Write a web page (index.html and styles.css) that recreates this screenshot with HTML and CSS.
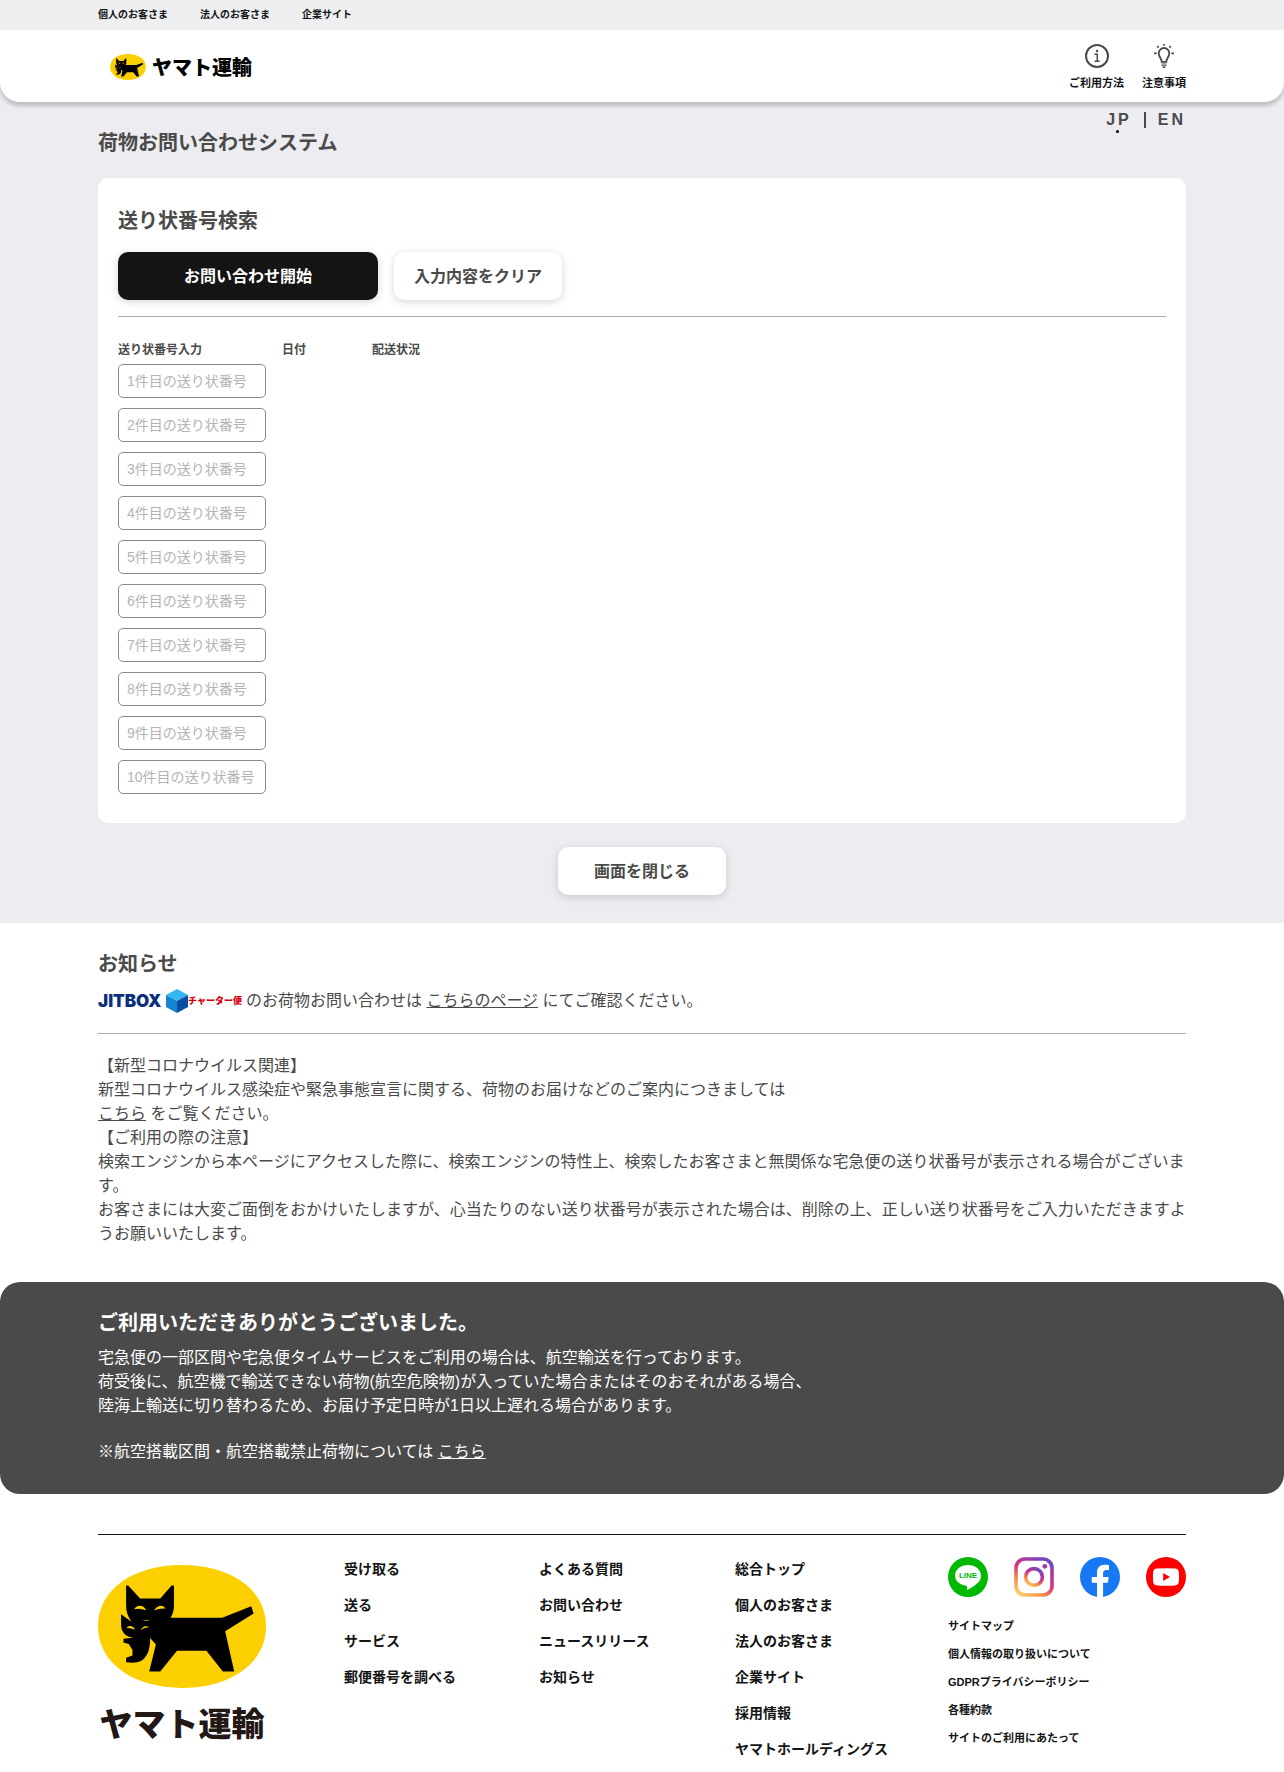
FILE: index.html
```html
<!DOCTYPE html>
<html lang="ja">
<head>
<meta charset="UTF-8">
<meta name="viewport" content="width=device-width, initial-scale=1.0">
<title>荷物お問い合わせシステム</title>
<link rel="stylesheet" href="styles.css">
</head>
<body>
    <svg class="symbols" aria-hidden="true">
        <symbol id="kuroneko" viewBox="57 74 502 367">
            <path fill="#fcd000" d="M57 257C57 145 165 74 308 74S559 145 559 257S451 441 308 441S57 369 57 257Z"/>
            <path d="M141 135H147L183 174H243L277 135H284V195Q284 216 274 231H428L515 197L522 219L437 272L464 392H430L381 330H293L243 392H210L230 311L213 292Q213 346 184 361Q170 368 141 364V351L160 344V328L149 310L133 305V294L163 291Q128 288 126 254V221L157 243Q141 222 141 195Z"/>
            <path fill="#fcd000" d="M165 206Q172 193 187 196Q196 198 201 210Q183 201 165 206ZM224 210Q231 198 241 196Q253 193 259 204Q242 202 224 210ZM142 262Q148 254 157 257Q165 260 168 267Q155 261 142 262ZM184 268Q188 260 197 257Q205 255 209 260Q195 261 184 268ZM185 235Q195 241 211 238Q202 245 185 235Z"/>
        </symbol>
    </svg>

    <div class="topbar">
        <nav class="inner topbar-nav">
            <a href="#">個人のお客さま</a>
            <a href="#">法人のお客さま</a>
            <a href="#">企業サイト</a>
        </nav>
    </div>

    <div class="system">
        <header class="header">
            <div class="inner header-inner">
                <a class="logo" href="#">
                    <svg class="logo-mark" aria-hidden="true"><use href="#kuroneko"/></svg>
                    <span>ヤマト運輸</span>
                </a>
                <nav class="header-nav">
                    <a href="#">
                        <svg viewBox="0 0 24 24" aria-hidden="true" fill="none" stroke="#4a4a4a">
                            <circle cx="12" cy="12" r="11" stroke-width="2"/>
                            <path d="M9.5 10.2H12.3V17M9.5 17.3H14.5" stroke-width="1.5"/>
                            <circle cx="12" cy="7" r="1.2" fill="#4a4a4a" stroke="none"/>
                        </svg>
                        ご利用方法
                    </a>
                    <a href="#">
                        <svg viewBox="0 0 24 24" aria-hidden="true" fill="none" stroke="#4a4a4a">
                            <path d="M9.7 17.8C9.7 14.5 6.7 13 6.7 9.3A5.3 5.3 0 0 1 17.3 9.3C17.3 13 14.3 14.5 14.3 17.8Z" stroke-width="1.8"/>
                            <path d="M9.5 20H14.5M9.5 21.8H14.5M10.7 23.4H13.3" stroke-width="1.1"/>
                            <path d="M12 0V1.8M5.3 2L6.5 3.7M18.7 2L17.5 3.7M2 9.4H4.6M19.4 9.4H22" stroke-width="1.6"/>
                        </svg>
                        注意事項
                    </a>
                </nav>
            </div>
        </header>

        <main class="inner">
            <div class="title-row">
                <h1>荷物お問い合わせシステム</h1>
                <nav class="lang">
                    <a class="current" href="#">JP</a>
                    <a href="#">EN</a>
                </nav>
            </div>

            <form class="card">
                <h2>送り状番号検索</h2>
                <div class="buttons">
                    <button type="submit" class="btn btn-start">お問い合わせ開始</button>
                    <button type="reset" class="btn">入力内容をクリア</button>
                </div>
                <table class="tracking">
                    <thead>
                        <tr><th class="col-number">送り状番号入力</th><th class="col-date">日付</th><th>配送状況</th></tr>
                    </thead>
                    <tbody>
                        <tr><td><input type="text" aria-label="1件目の送り状番号" placeholder="1件目の送り状番号"></td><td></td><td></td></tr>
                        <tr><td><input type="text" aria-label="2件目の送り状番号" placeholder="2件目の送り状番号"></td><td></td><td></td></tr>
                        <tr><td><input type="text" aria-label="3件目の送り状番号" placeholder="3件目の送り状番号"></td><td></td><td></td></tr>
                        <tr><td><input type="text" aria-label="4件目の送り状番号" placeholder="4件目の送り状番号"></td><td></td><td></td></tr>
                        <tr><td><input type="text" aria-label="5件目の送り状番号" placeholder="5件目の送り状番号"></td><td></td><td></td></tr>
                        <tr><td><input type="text" aria-label="6件目の送り状番号" placeholder="6件目の送り状番号"></td><td></td><td></td></tr>
                        <tr><td><input type="text" aria-label="7件目の送り状番号" placeholder="7件目の送り状番号"></td><td></td><td></td></tr>
                        <tr><td><input type="text" aria-label="8件目の送り状番号" placeholder="8件目の送り状番号"></td><td></td><td></td></tr>
                        <tr><td><input type="text" aria-label="9件目の送り状番号" placeholder="9件目の送り状番号"></td><td></td><td></td></tr>
                        <tr><td><input type="text" aria-label="10件目の送り状番号" placeholder="10件目の送り状番号"></td><td></td><td></td></tr>
                    </tbody>
                </table>
            </form>

            <div class="close">
                <button type="button" class="btn">画面を閉じる</button>
            </div>
        </main>
    </div>

    <section class="inner news">
        <h2>お知らせ</h2>
        <div class="jitbox-row">
            <span class="jitbox">
                <span class="jitbox-name">JITBOX</span>
                <svg viewBox="0 0 22 24" aria-hidden="true">
                    <path fill="#35b6ec" d="M11 0L22 6L11 12L0 6Z"/>
                    <path fill="#1583d0" d="M0 6L11 12V24L0 18Z"/>
                    <path fill="#0b4da2" d="M22 6L11 12V24L22 18Z"/>
                </svg>
                <span class="jitbox-sub">チャーター便</span>
            </span>
            <p>のお荷物お問い合わせは <a href="#">こちらのページ</a> にてご確認ください。</p>
        </div>
        <p class="notice">
            【新型コロナウイルス関連】<br>
            新型コロナウイルス感染症や緊急事態宣言に関する、荷物のお届けなどのご案内につきましては<br>
            <a href="#">こちら</a> をご覧ください。<br>
            【ご利用の際の注意】<br>
            検索エンジンから本ページにアクセスした際に、検索エンジンの特性上、検索したお客さまと無関係な宅急便の送り状番号が表示される場合がございます。<br>
            お客さまには大変ご面倒をおかけいたしますが、心当たりのない送り状番号が表示された場合は、削除の上、正しい送り状番号をご入力いただきますようお願いいたします。
        </p>
    </section>

    <section class="thanks">
        <div class="inner">
            <h2>ご利用いただきありがとうございました。</h2>
            <p>
                宅急便の一部区間や宅急便タイムサービスをご利用の場合は、航空輸送を行っております。<br>
                荷受後に、航空機で輸送できない荷物(航空危険物)が入っていた場合またはそのおそれがある場合、<br>
                陸海上輸送に切り替わるため、お届け予定日時が1日以上遅れる場合があります。
            </p>
            <p>※航空搭載区間・航空搭載禁止荷物については <a href="#">こちら</a></p>
        </div>
    </section>

    <footer class="footer">
        <div class="inner">
            <div class="footer-grid">
                <a class="footer-logo" href="#">
                    <svg class="footer-mark" aria-hidden="true"><use href="#kuroneko"/></svg>
                    <span>ヤマト運輸</span>
                </a>
                <ul class="links">
                    <li><a href="#">受け取る</a></li>
                    <li><a href="#">送る</a></li>
                    <li><a href="#">サービス</a></li>
                    <li><a href="#">郵便番号を調べる</a></li>
                </ul>
                <ul class="links">
                    <li><a href="#">よくある質問</a></li>
                    <li><a href="#">お問い合わせ</a></li>
                    <li><a href="#">ニュースリリース</a></li>
                    <li><a href="#">お知らせ</a></li>
                </ul>
                <ul class="links">
                    <li><a href="#">総合トップ</a></li>
                    <li><a href="#">個人のお客さま</a></li>
                    <li><a href="#">法人のお客さま</a></li>
                    <li><a href="#">企業サイト</a></li>
                    <li><a href="#">採用情報</a></li>
                    <li><a href="#">ヤマトホールディングス</a></li>
                </ul>
                <div class="footer-side">
                    <div class="social">
                        <a href="#" aria-label="LINE">
                            <svg viewBox="0 0 40 40">
                                <circle cx="20" cy="20" r="20" fill="#00b900"/>
                                <path fill="#fff" d="M20 8C12.8 8 7 12.7 7 18.5C7 23.8 11.8 28 18 28.8C19.4 29.1 19.2 30 19 32.2C19 32.8 19.5 33 20.2 32.6C24 30.5 28.5 27.5 31 24.5C32.4 22.8 33 20.8 33 18.5C33 12.7 27.2 8 20 8Z"/>
                                <text class="line-text" x="20" y="21" text-anchor="middle" fill="#00b900">LINE</text>
                            </svg>
                        </a>
                        <a href="#" aria-label="Instagram">
                            <svg viewBox="0 0 40 40">
                                <defs>
                                    <linearGradient id="insta" x1="0.2" y1="1" x2="0.8" y2="0">
                                        <stop offset="0" stop-color="#fdc765"/>
                                        <stop offset="0.25" stop-color="#f68b4a"/>
                                        <stop offset="0.5" stop-color="#d63a7a"/>
                                        <stop offset="0.75" stop-color="#b035a0"/>
                                        <stop offset="1" stop-color="#6b4bc0"/>
                                    </linearGradient>
                                </defs>
                                <rect x="2" y="2" width="36" height="36" rx="9" fill="none" stroke="url(#insta)" stroke-width="3.6"/>
                                <circle cx="20" cy="20" r="8.4" fill="none" stroke="url(#insta)" stroke-width="3.6"/>
                                <circle cx="30.8" cy="9.3" r="2.4" fill="#a435a8"/>
                            </svg>
                        </a>
                        <a href="#" aria-label="Facebook">
                            <svg viewBox="0 0 40 40">
                                <circle cx="20" cy="20" r="20" fill="#1877f2"/>
                                <path fill="#fff" d="M17 40V25.8H11.8V20H17V15.6C17 10.6 20 7.8 24.5 7.8C26.7 7.8 29 8.2 29 8.2V13.1H26.4C23.9 13.1 23.1 14.7 23.1 16.3V20H28.7L27.8 25.8H23.1V40Z"/>
                            </svg>
                        </a>
                        <a href="#" aria-label="YouTube">
                            <svg viewBox="0 0 40 40">
                                <circle cx="20" cy="20" r="20" fill="#f00"/>
                                <path fill="#fff" d="M11 11.6Q20 10.8 29 11.6Q32.4 11.8 32.8 15Q33.4 20 32.8 25Q32.4 28.2 29 28.4Q20 29.2 11 28.4Q7.6 28.2 7.2 25Q6.6 20 7.2 15Q7.6 11.8 11 11.6Z"/>
                                <path fill="#f00" d="M17.2 16.1L24 20L17.2 23.9Z"/>
                            </svg>
                        </a>
                    </div>
                    <ul class="policies">
                        <li><a href="#">サイトマップ</a></li>
                        <li><a href="#">個人情報の取り扱いについて</a></li>
                        <li><a href="#">GDPRプライバシーポリシー</a></li>
                        <li><a href="#">各種約款</a></li>
                        <li><a href="#">サイトのご利用にあたって</a></li>
                    </ul>
                </div>
            </div>
        </div>
    </footer>
</body>
</html>
```

FILE: styles.css
```css
* {
    box-sizing: border-box;
}

body {
    margin: 0;
    background-color: #fff;
    color: #4a4a4a;
    font-family: "Liberation Sans", "Noto Sans CJK JP", sans-serif;
    font-size: 16px;
    line-height: 24px;
    text-spacing-trim: space-all;
}

a {
    color: inherit;
}

h1,
h2 {
    margin: 0;
    font-size: 20px;
    line-height: 26px;
}

p {
    margin: 0;
}

ul {
    margin: 0;
    padding: 0;
    list-style: none;
}

svg {
    display: block;
}

.symbols {
    display: none;
}

.inner {
    width: 100%;
    max-width: 1128px;
    margin: 0 auto;
    padding: 0 20px;
}

/* top bar */
.topbar {
    background-color: #eeeff1;
    color: #141414;
    font-size: 10px;
    font-weight: bold;
    line-height: 30px;
}

.topbar-nav {
    display: flex;
    gap: 32px;
}

.topbar a,
.header a,
.lang a,
.footer a {
    text-decoration: none;
}

/* header */
.system {
    background-color: #edecf1;
}

.header {
    background-color: #fff;
    border-radius: 0 0 20px 20px;
    box-shadow: 0 4px 4px rgba(0, 0, 0, 0.2);
}

.header-inner {
    display: flex;
    justify-content: space-between;
    align-items: center;
    height: 72px;
    padding-top: 2px;
}

.logo {
    display: flex;
    align-items: center;
    gap: 6px;
    padding-left: 12px;
    color: #000;
    font-family: "Noto Sans CJK JP", sans-serif;
    font-size: 20px;
    font-weight: 900;
}

.logo-mark {
    width: 36px;
    height: 26px;
}

.header-nav {
    display: flex;
    gap: 18px;
    color: #141414;
    font-size: 11px;
    font-weight: bold;
    line-height: 16px;
}

.header-nav a {
    display: flex;
    flex-direction: column;
    align-items: center;
    gap: 7px;
}

.header-nav svg {
    width: 24px;
    height: 24px;
}

/* page title */
.title-row {
    display: flex;
    justify-content: space-between;
    align-items: flex-start;
    margin-bottom: 22px;
}

.title-row h1 {
    padding-top: 28px;
}

.lang {
    display: flex;
    padding-top: 10px;
    font-weight: bold;
    line-height: 16px;
    letter-spacing: 3px;
}

.lang a + a {
    margin-left: 12px;
    padding-left: 12px;
    border-left: 2px solid #4a4a4a;
}

.lang .current {
    position: relative;
}

.lang .current::after {
    content: "";
    position: absolute;
    top: 18px;
    left: 10px;
    width: 3px;
    height: 3px;
    border-radius: 50%;
    background-color: #000;
}

/* search card */
.card {
    padding: 30px 20px 19px;
    border-radius: 10px;
    background-color: #fff;
}

.buttons {
    display: flex;
    gap: 16px;
    margin-top: 18px;
    padding-bottom: 16px;
    border-bottom: 1px solid #aaa;
}

.btn {
    width: 168px;
    height: 48px;
    padding: 0 0 3px;
    border: none;
    border-radius: 10px;
    background-color: #fff;
    box-shadow: 0 2px 8px rgba(0, 0, 0, 0.16);
    color: #4a4a4a;
    font-family: inherit;
    font-size: 16px;
    font-weight: bold;
    cursor: pointer;
}

.btn-start {
    width: 260px;
    background-color: #141414;
    color: #fff;
}

.tracking {
    width: 100%;
    margin-top: 24px;
    border-collapse: collapse;
    table-layout: fixed;
}

.tracking th {
    padding: 0 0 5px;
    font-size: 12px;
    line-height: 18px;
    text-align: left;
}

.tracking .col-number {
    width: 164px;
}

.tracking .col-date {
    width: 90px;
}

.tracking td {
    padding: 0 0 10px;
}

.tracking input {
    display: block;
    width: 148px;
    height: 34px;
    padding: 0 8px;
    border: 1px solid #8a8a8a;
    border-radius: 5px;
    font-family: inherit;
    font-size: 14px;
}

.tracking input::placeholder {
    color: #b4b4b4;
}

.close {
    display: flex;
    justify-content: center;
    padding: 24px 0 28px;
}

/* news */
.news {
    padding-top: 28px;
    padding-bottom: 36px;
}

.jitbox-row {
    display: flex;
    align-items: center;
    gap: 4px;
    margin: 12px 0 20px;
    padding-bottom: 20px;
    border-bottom: 1px solid #aaa;
}

.jitbox {
    display: flex;
    align-items: center;
    font-weight: 900;
}

.jitbox svg {
    width: 22px;
    height: 24px;
}

.jitbox-name {
    width: 68px;
    color: #0b2f7d;
    font-family: Inter, sans-serif;
    font-size: 17px;
}

.jitbox-sub {
    color: #d7000f;
    font-family: "Noto Sans CJK JP", sans-serif;
    font-size: 9px;
}

/* thanks */
.thanks {
    padding: 28px 0 30px;
    border-radius: 20px;
    background-color: #4a4a4a;
    color: #fff;
}

.thanks h2 {
    margin-bottom: 10px;
}

.thanks p + p {
    margin-top: 22px;
}

/* footer */
.footer {
    margin-top: 40px;
    color: #141414;
    font-size: 14px;
    font-weight: bold;
}

.footer-grid {
    display: grid;
    grid-template-columns: 246px 195fr 196fr 213fr 238px;
    padding-top: 16px;
    border-top: 1px solid #141414;
}

.footer-logo {
    width: 168px;
    margin-top: 14px;
    color: #231815;
    font-family: "Noto Sans CJK JP", sans-serif;
    font-size: 33px;
    font-weight: 900;
    line-height: 40px;
    text-align: center;
}

.footer-mark {
    width: 168px;
    height: 123px;
    margin-bottom: 14px;
}

.links {
    line-height: 36px;
}

.social {
    display: flex;
    justify-content: space-between;
    margin: 6px 0 15px;
}

.social svg {
    width: 40px;
    height: 40px;
}

.line-text {
    font-size: 8px;
}

.policies {
    font-size: 11px;
    line-height: 28px;
}
```
